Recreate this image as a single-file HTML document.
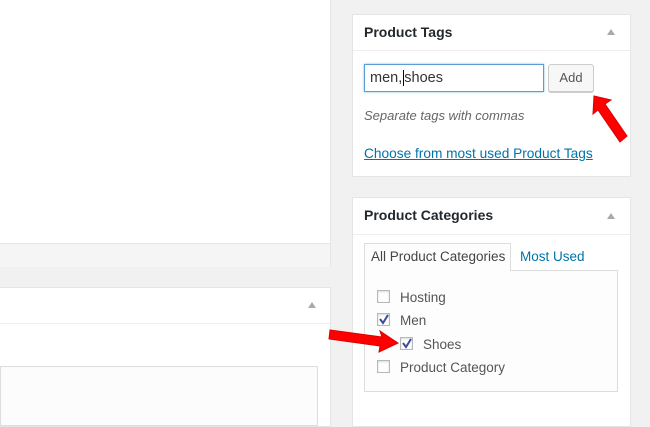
<html><head><style>
body{margin:0;width:650px;height:414px;background:#f1f1f1;font-family:"Liberation Sans",sans-serif;position:relative;overflow:hidden;color:#444}
.a{position:absolute}
.box{background:#fff;border:1px solid #e5e5e5;box-sizing:border-box}
.h{font-size:14px;font-weight:bold;color:#23282d}
.tri{width:0;height:0;border-left:4px solid transparent;border-right:4px solid transparent;border-bottom:6px solid #aaa}
.cb{width:13px;height:13px;border:1px solid #b4b9be;background:#fff;box-sizing:border-box;box-shadow:inset 0 1px 2px rgba(0,0,0,.15)}
.lbl{font-size:13.5px;color:#555}
</style></head><body>
<div class="a box" style="left:-2px;top:-2px;width:333px;height:269px"></div>
<div class="a" style="left:0;top:243px;width:330px;height:23px;background:#f5f5f5;border-top:1px solid #e5e5e5"></div>
<div class="a box" style="left:-2px;top:287px;width:333px;height:140px"></div>
<div class="a" style="left:0;top:323px;width:330px;height:1px;background:#eee"></div>
<div class="a tri" style="left:308px;top:302px"></div>
<div class="a" style="left:0;top:366px;width:318px;height:60px;background:#fcfcfc;border:1px solid #ddd;box-sizing:border-box"></div>

<div class="a box" style="left:352px;top:14px;width:279px;height:163px"></div>
<div class="a" style="left:353px;top:50px;width:277px;height:1px;background:#eee"></div>
<div class="a h" style="left:364px;top:24px">Product Tags</div>
<div class="a tri" style="left:607px;top:29px"></div>
<div class="a" style="left:364px;top:64px;width:180px;height:28px;border:1px solid #5b9dd9;box-shadow:0 0 2px rgba(30,140,190,.6);box-sizing:border-box;font-size:14.5px;color:#333;line-height:26px;padding-left:5px">men,<span style="border-left:1px solid #000;margin-left:1px">shoes</span></div>
<div class="a" style="left:548px;top:64px;width:46px;height:28px;border:1px solid #ccc;border-radius:3px;background:#f7f7f7;box-sizing:border-box;font-size:13px;color:#555;text-align:center;line-height:26px;box-shadow:0 1px 0 #ccc">Add</div>
<div class="a" style="left:364px;top:108px;font-size:13px;font-style:italic;color:#666">Separate tags with commas</div>
<div class="a" style="left:364px;top:146px;font-size:13.7px;color:#0073aa;text-decoration:underline">Choose from most used Product Tags</div>

<div class="a box" style="left:352px;top:197px;width:279px;height:230px"></div>
<div class="a" style="left:353px;top:234px;width:277px;height:1px;background:#eee"></div>
<div class="a h" style="left:364px;top:207px">Product Categories</div>
<div class="a tri" style="left:607px;top:213px"></div>
<div class="a" style="left:364px;top:270px;width:254px;height:122px;border:1px solid #ddd;background:#fdfdfd;box-sizing:border-box"></div>
<div class="a" style="left:364px;top:243px;width:147px;height:28px;border:1px solid #ddd;border-bottom:none;background:#fdfdfd;box-sizing:border-box;font-size:13.5px;color:#444;line-height:26px;padding-left:6px">All Product Categories</div>
<div class="a" style="left:520px;top:249px;font-size:13.5px;color:#0073aa">Most Used</div>
<div class="a cb" style="left:377px;top:290px"></div><div class="a lbl" style="left:400px;top:290px">Hosting</div>
<div class="a cb" style="left:377px;top:313px"></div><div class="a lbl" style="left:400px;top:313px">Men</div>
<div class="a cb" style="left:400px;top:337px"></div><div class="a lbl" style="left:423px;top:337px">Shoes</div>
<div class="a cb" style="left:377px;top:360px"></div><div class="a lbl" style="left:400px;top:360px">Product Category</div>

<svg class="a" style="left:0;top:0" width="650" height="414">
<g fill="none" stroke="#3b4a9a" stroke-width="2">
<path d="M380 319 L383 323 L388 315"/>
<path d="M403 343 L406 347 L411 339"/>
</g>
<g fill="#f00" stroke="#d00" stroke-width="1">
<path d="M594 96 L611 100 L605 104 L627 136 L620 142 L598 110 L593 114 Z"/>
<path d="M330 330 L382 337 L380 331 L398 343 L379 352 L380 346 L329 339 Z"/>
</g></svg>
</body></html>
